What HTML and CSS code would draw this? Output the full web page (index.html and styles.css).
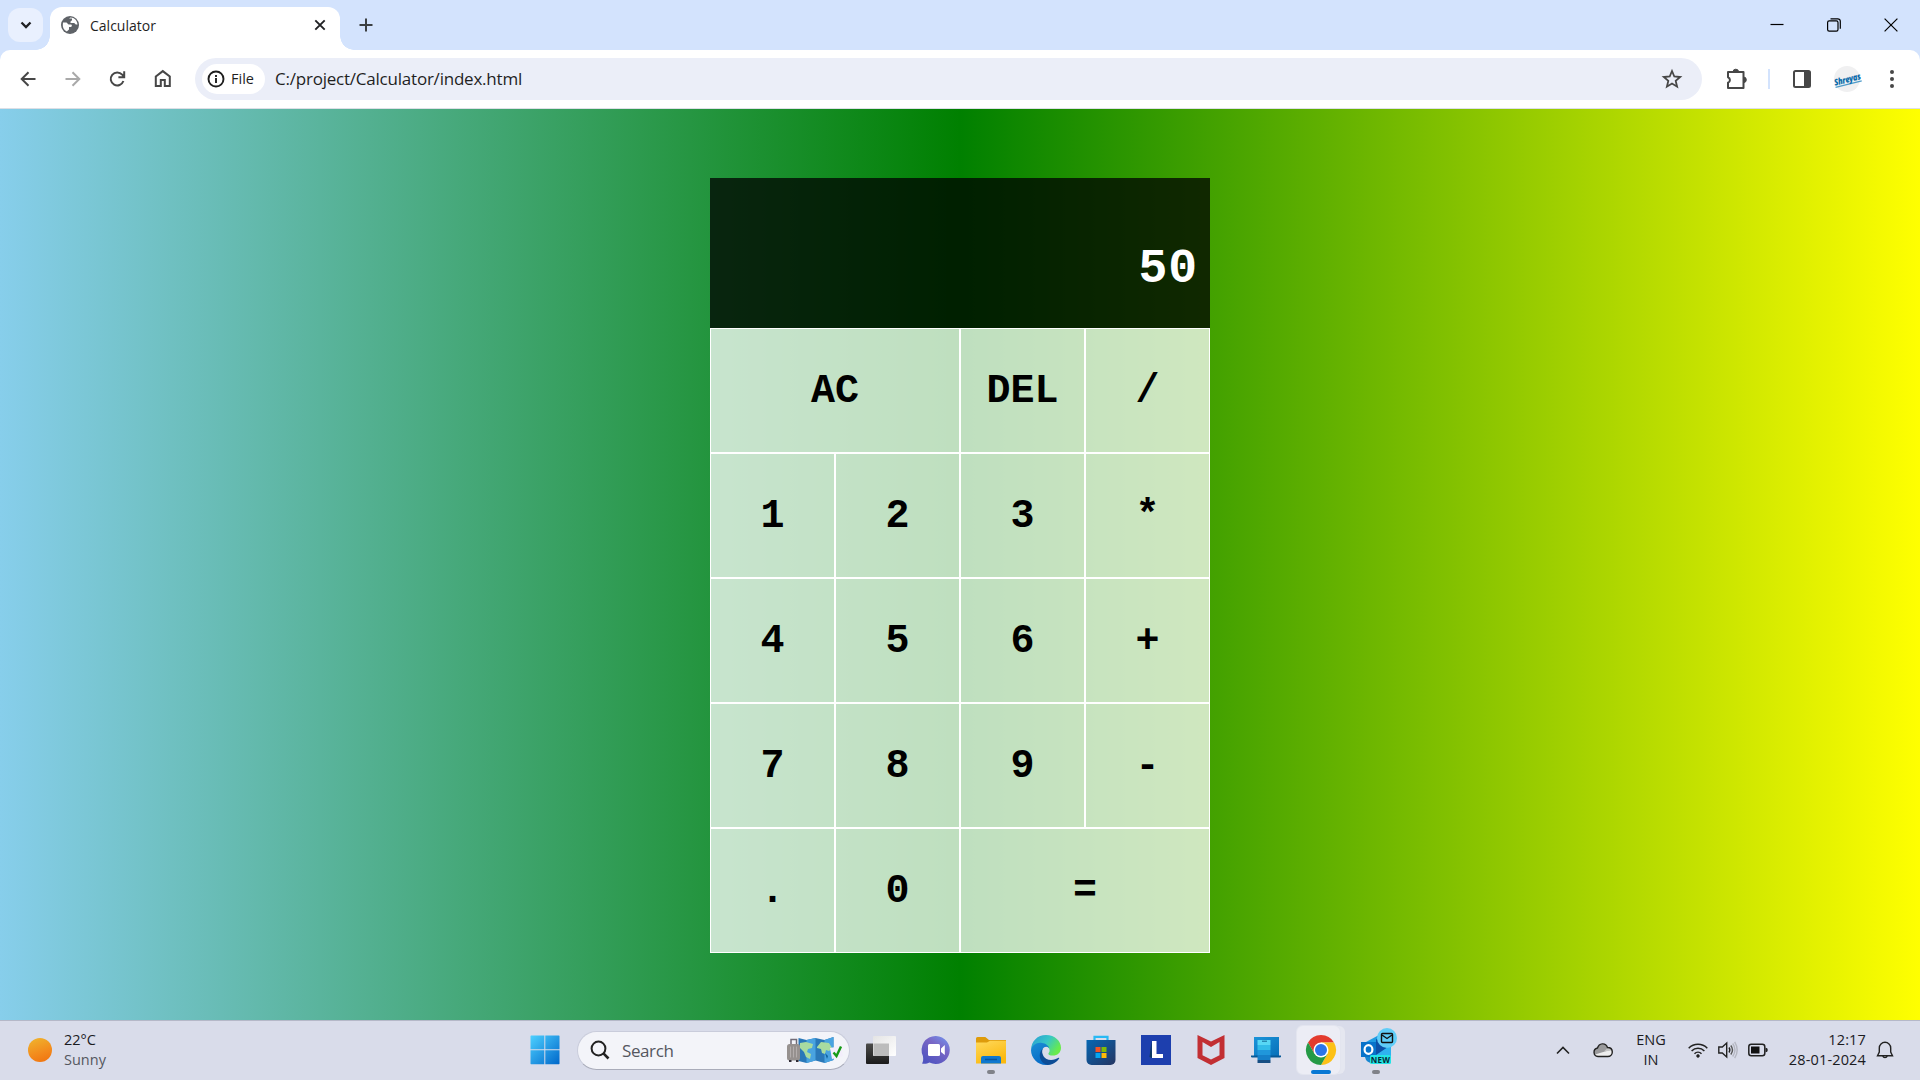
FILE: index.html
```html
<!DOCTYPE html>
<html lang="en">
<head>
<meta charset="utf-8">
<title>Calculator</title>
<link rel="stylesheet" href="styles.css">
</head>
<body>
<header class="tabstrip">
  <button class="tab-search"><svg width="12" height="8" viewBox="0 0 12 8"><path d="M1.500 1.500 6 6l4.500-4.500" fill="none" stroke="#202124" stroke-width="2.300"/></svg></button>
  <div class="tab">
    <svg class="globe" width="18" height="18" viewBox="0 0 18 18"><circle cx="9" cy="9" r="9" fill="#5f6368"/><path d="M2 6.500h3.500l2 2h2.200c1.800 0 1.300 2.500 0 2.500H8v2.500l-2.200 2C3 14 1.600 11.500 1.800 9zM8 2.500h3v1.800L9.500 5.500v1.400h3.700l1.600 1.600h1.700C16.200 4.500 13.500 1.500 9.500 1.500z" fill="#fff"/></svg>
    <span class="tab-title">Calculator</span>
    <svg class="tab-close" width="12" height="12" viewBox="0 0 12 12"><path d="m1.300 1.300 9.400 9.400m0-9.400-9.400 9.400" stroke="#202124" stroke-width="1.900"/></svg>
  </div>
  <svg class="new-tab" width="14" height="14" viewBox="0 0 14 14"><path d="M7 .5v13M.5 7h13" stroke="#3c4043" stroke-width="2"/></svg>
  <div class="window-buttons">
    <svg width="14" height="14" viewBox="0 0 14 14"><path d="M.5 6.500h13" stroke="#000" stroke-width="1.200"/></svg>
    <svg width="14" height="14" viewBox="0 0 14 14" fill="none" stroke="#000" stroke-width="1.200"><rect x=".6" y="2.800" width="10.400" height="10.400" rx="1.600"/><path d="M3.500.8h7.200a2.500 2.500 0 0 1 2.600 2.600v7.300"/></svg>
    <svg width="14" height="14" viewBox="0 0 14 14"><path d="m.6.6 12.800 12.800M13.400.6.6 13.400" stroke="#000" stroke-width="1.200"/></svg>
  </div>
</header>
<nav class="toolbar">
  <div class="nav-buttons">
    <svg width="16" height="16" viewBox="0 0 16 16" fill="none" stroke="#474747" stroke-width="2"><path d="M15.500 8H2M8.500 1.200 1.700 8l6.800 6.800"/></svg>
    <svg width="16" height="16" viewBox="0 0 16 16" fill="none" stroke="#a9a9a9" stroke-width="2"><path d="M.5 8H14M7.500 1.200 14.300 8l-6.800 6.800"/></svg>
    <svg width="16" height="16" viewBox="0.800 0 16 16" fill="none" stroke="#474747" stroke-width="2"><path d="M14.200 10A6.500 6.500 0 1 1 13 3.700L15 6M15 .3V6.300H9.200"/></svg>
    <svg width="18" height="18" viewBox="1.200 0.500 18 18" fill="none" stroke="#474747" stroke-width="2"><path d="M2 7 9 1.600 16 7v9.500h-5v-6H7v6H2z"/></svg>
  </div>
  <div class="omnibox">
    <span class="chip"><svg width="18" height="18" viewBox="0 0 18 18"><circle cx="9" cy="9" r="7.500" fill="none" stroke="#1f1f1f" stroke-width="1.900"/><path d="M9 8v5M9 5v1.900" stroke="#1f1f1f" stroke-width="1.900"/></svg><span>File</span></span>
    <span class="url">C:/project/Calculator/index.html</span>
    <svg class="star" width="20" height="20" viewBox="0 0 20 20"><path d="m10 2 2.300 5.500 5.900.5-4.500 3.900 1.400 5.800L10 14.600l-5.100 3.100 1.400-5.800L1.800 8l5.900-.5z" fill="none" stroke="#474747" stroke-width="1.800"/></svg>
  </div>
  <svg class="puzzle" width="22" height="22" viewBox="0 0 22 22"><path d="M2 4h15.500v16H2v-5.200a3 3 0 0 0 0-5.600z" fill="none" stroke="#474747" stroke-width="2" stroke-linejoin="round"/><path d="M7 4a2.800 2.800 0 0 1 5.600 0zM17.500 9a2.800 2.800 0 0 1 0 5.600z" fill="#474747" stroke="#474747"/></svg>
  <i class="separator"></i>
  <svg class="panel" width="18" height="18" viewBox="0 0 18 18"><rect x="1" y="1" width="16" height="16" rx="1.500" fill="none" stroke="#474747" stroke-width="2"/><path d="M11 1h6v16h-6z" fill="#474747"/></svg>
  <span class="avatar"><b>Shreyas</b></span>
  <svg class="dots" width="4" height="20" viewBox="0 0 4 20" fill="#474747"><circle cx="2" cy="3" r="2"/><circle cx="2" cy="10" r="2"/><circle cx="2" cy="17" r="2"/></svg>
</nav>
<main class="page">
  <div class="calculator">
    <output class="display">50</output>
    <button class="key wide">AC</button><button class="key">DEL</button><button class="key">/</button>
    <button class="key">1</button><button class="key">2</button><button class="key">3</button><button class="key">*</button>
    <button class="key">4</button><button class="key">5</button><button class="key">6</button><button class="key">+</button>
    <button class="key">7</button><button class="key">8</button><button class="key">9</button><button class="key">-</button>
    <button class="key">.</button><button class="key">0</button><button class="key wide">=</button>
  </div>
</main>
<footer class="taskbar">
  <div class="weather">
    <i class="sun"></i>
    <div class="two-line"><span>22°C</span><span class="muted">Sunny</span></div>
  </div>
  <svg class="start" width="30" height="30" viewBox="0 0 30 30"><defs><linearGradient id="win" x2="1" y2="1"><stop stop-color="#4dd0ff"/><stop offset="1" stop-color="#0067ca"/></linearGradient></defs><path d="M1 .5h13.300v13.800H.5V1zM15.300.5H29l.5.500v13.300H15.300zM.5 15.300h13.800v14H1l-.5-.5zM15.300 15.300h14.200v13.500l-.5.500H15.300z" fill="url(#win)"/></svg>
  <div class="search">
    <svg width="20" height="20" viewBox="0 0 20 20" fill="none" stroke="#222"><circle cx="8.500" cy="8.500" r="6.900" stroke-width="2"/><path d="m13.200 13.200 5.300 5.300" stroke-width="2.600"/></svg>
    <span>Search</span>
    <svg class="travel" width="58" height="28" viewBox="0 0 58 28">
      <path d="m11.500 2 8 2 9-2 9 2 9-3v23l-9 3-9-2.500-9 2.500-8-2z" fill="#2a78b8"/><path d="m19.500 4 9-2v22.500l-9 2.500zM37.500 4l9-3v23l-9 3z" fill="#49a3e0"/>
      <path d="M13 7l6-1 7 2-1 4-4 1-1 3 4 2-1 5-4-2-2-5-4-4zM30 11l4-5 8 1 3 5-3 3-3-1-1 4-3-1-1-4-4-1z" fill="#a8dba0"/>
      <path d="m38 17 3 3-1 3z" fill="#0f639d"/>
      <path d="M4 8V3.500h5.500V8" fill="none" stroke="#706b77" stroke-width="1.500"/><rect y="8" width="13" height="16.500" rx="2.500" fill="#96918f"/><path d="M3.500 10.500v11m3-11v11m3-11v11" stroke="#b9b4b4" stroke-width=".8"/><path d="M2 24h2.500v2H2zm7 0h2.500v2H9z" fill="#302c35"/>
      <path d="m43 12 11-2 2 10-11 3z" fill="#f3eefb"/><path d="m46.500 16.500 3 3.500 4.500-9.500" fill="none" stroke="#169b16" stroke-width="2.400"/>
    </svg>
  </div>
  <div class="apps">
    <span class="app"><svg width="30" height="30" viewBox="0 0 30 30"><defs><linearGradient id="tv" x2="0" y2="1"><stop stop-color="#4c4c4a"/><stop offset="1" stop-color="#1b1b1b"/></linearGradient><linearGradient id="tw" x2="1" y2="1"><stop stop-color="#e4e4e4"/><stop offset="1" stop-color="#fff"/></linearGradient></defs><rect y="8.500" width="23" height="20.500" rx="1" fill="url(#tv)"/><rect x="7" y="1" width="23" height="20" rx="1" fill="url(#tw)"/><path d="M7.500 8.500H23V21H8.500l-1-1z" fill="#bcbcbc"/></svg></span>
    <span class="app"><svg width="30" height="30" viewBox="0 0 30 30"><defs><linearGradient id="ch" x1="1" x2="0.300" y2="1"><stop stop-color="#7299f2"/><stop offset=".45" stop-color="#7866c5"/><stop offset="1" stop-color="#5054c0"/></linearGradient></defs><path d="M15 1a14 14 0 1 1-6.500 26.500C6 29 3 29 1 28.500c1.300-1.500 1.500-4.500.9-7.500A14 14 0 0 1 15 1z" fill="url(#ch)"/><rect x="7" y="9" width="12" height="12" rx="1.500" fill="#fff"/><path d="m20 13.500 3.800-3.500v10L20 17z" fill="#fff"/></svg></span>
    <span class="app running"><svg width="30" height="30" viewBox="0 0 30 30"><defs><linearGradient id="fo" x2=".5" y2="1"><stop stop-color="#ffd95d"/><stop offset="1" stop-color="#fbb90e"/></linearGradient></defs><path d="M0 3.500Q0 2 1.500 2h7.800L13 5h17v6H0z" fill="#de9b0b"/><path d="M0 7.500h11L14 5.800h16v22.700H0z" fill="url(#fo)"/><path d="M5 28.500V23q0-2 2-2h16q2 0 2 2v5.500z" fill="#0f78cf"/><path d="M9 24.500h12" stroke="#07559e" stroke-width="1.500"/></svg></span>
    <span class="app"><svg width="30" height="30" viewBox="0 0 30 30"><defs><linearGradient id="e1" x2="1" y2=".5"><stop stop-color="#299bd4"/><stop offset=".55" stop-color="#36c6c7"/><stop offset="1" stop-color="#68eb4b"/></linearGradient><linearGradient id="e2" x2=".5" y2="1"><stop stop-color="#1b8ed5"/><stop offset="1" stop-color="#0669c5"/></linearGradient></defs><path d="M0 15C.4 6 6.500 0 15 0c9 0 15 6.200 15 12.700 0 5-3.700 7.900-8 7.900-3.300 0-5-1.200-4.600-2.200 2.500-2.700 1.200-7.100-4.400-7.900C7 9.800 1.500 11.500 0 15z" fill="url(#e1)"/><path d="M0 15C1 10 6 7 11 8c3.500.4 6.500 2.500 7.200 5-4.300-3.400-8 1-7.200 5.500 1 6 7 9.500 9.500 10.500C10 33 0 25 0 15z" fill="url(#e2)"/><path d="M11.700 13.500c-2 5 1.500 11.500 8.300 11.500 3 0 5.500-1.300 7.500-2.200.6-.2 1 .2.600.8C25.500 27.500 21 30 16.500 30 9 28.500 6 19 11.700 13.500z" fill="#0d4d96"/></svg></span>
    <span class="app"><svg width="30" height="30" viewBox="0 0 30 30"><defs><linearGradient id="st" x2="1" y2="1"><stop stop-color="#0667b3"/><stop offset="1" stop-color="#253562"/></linearGradient></defs><path d="M8.500 6V1.800h13V6" fill="none" stroke="#28b9f4" stroke-width="2.200"/><path d="M.5 5h29v20a5 5 0 0 1-5 5h-19a5 5 0 0 1-5-5z" fill="url(#st)"/><path d="M9.500 12h5v5h-5z" fill="#f35325"/><path d="M15.500 12h5v5h-5z" fill="#81bc06"/><path d="M9.500 18h5v5h-5z" fill="#05a6f0"/><path d="M15.500 18h5v5h-5z" fill="#ffba08"/></svg></span>
    <span class="app"><svg width="30" height="30" viewBox="0 0 30 30"><path d="M0 0h30v30H0z" fill="#1d3fae"/><path d="m10.500 6-2 16 2.500 1z" fill="#0c385f"/><path d="M11 6h4.500v13H22v4H11z" fill="#fff"/></svg></span>
    <span class="app"><svg width="30" height="30" viewBox="0 0 30 30"><path d="M1.500 0 15 6.500 28.500 0v23L15 30 1.500 23zM6.500 7v13.200L15 24.500l8.500-4.300V7L15 12z" fill="#c22f33" fill-rule="evenodd"/></svg></span>
    <span class="app"><svg width="30" height="30" viewBox="0 0 30 30"><defs><linearGradient id="pl" x2="1" y2="1"><stop stop-color="#1b94d9"/><stop offset="1" stop-color="#0870b9"/></linearGradient></defs><path d="M3 2h25v19H3z" fill="url(#pl)"/><path d="M0 20.500h30v1.500l-1 .5H1l-1-.5z" fill="#075998"/><path d="M6.500 5h13v5h-13z" fill="#57d7f5"/><path d="M6.500 10h13v5h-13z" fill="#32bce9"/><path d="M6.500 15h13v5h-13z" fill="#2097db"/><path d="M6.500 20h13v5h-13z" fill="#1680c9"/><path d="M6.500 25h13v3h-13z" fill="#174e83"/><path d="M11 6.200h5" stroke="#126794"/></svg></span>
    <span class="app active"><svg width="30" height="30" viewBox="0 0 30 30"><path d="M2 7.500a15 15 0 0 1 26 0H15L8.500 18.700z" fill="#e33b2e"/><path d="M28 7.500A15 15 0 0 1 15 30l6.500-11.200L15 7.500z" fill="#fdc116"/><path d="M2 7.500A15 15 0 0 0 15 30l6.500-11.200h-13z" fill="#259a46"/><circle cx="15" cy="15" r="7.500" fill="#fff"/><circle cx="15" cy="15" r="6" fill="#2c75e9"/></svg></span>
    <span class="app running outlook"><svg width="37" height="38" viewBox="0 0 37 38">
      <path d="m5 14 13-7 12 7v20H8z" fill="#1f9be2"/><path d="m15 11 14 7-14 10z" fill="#0b51a8"/><path d="m15 27 15-10v17H9z" fill="#2fb3ef"/><path d="M4 29h8v6q-7 0-8-6z" fill="#1687d1"/><path d="M0 14h15v15H0z" fill="#0873ca"/><ellipse cx="7.500" cy="21.500" rx="3.900" ry="4.300" fill="none" stroke="#fff" stroke-width="2.200"/><circle cx="26" cy="10" r="10" fill="#60cdf8"/><rect x="20.500" y="5.500" width="11" height="9" rx="1" fill="none" stroke="#111" stroke-width="1.400"/><path d="m21 7 5 3.500L31 7" fill="none" stroke="#111" stroke-width="1.300"/><rect x="9" y="27" width="21" height="9" rx="1.500" fill="#24e4e5"/><text class="new" x="19.500" y="34.500" text-anchor="middle">NEW</text></svg></span>
  </div>
  <div class="tray">
    <svg class="chevron" width="14" height="9" viewBox="0 0 14 9"><path d="m1 7.500 6-6 6 6" fill="none" stroke="#222" stroke-width="1.600"/></svg>
    <svg class="cloud" width="20" height="16" viewBox="0 0 20 16"><path d="M5 14.500a4.300 4.300 0 0 1-.5-8.500C6 1 12.500.2 14.500 5.500c3 0 4.800 2 4.800 4.500s-2 4.500-4.500 4.500z" fill="#eee"/><path d="M2 12.500 18.500 7.500C17 5.500 15.500 5.500 14.500 5.500 12.500.5 6 1.500 4.500 6 1 7 .2 10 2 12.500z" fill="#9a9a9c"/><path d="m11 9.500 4-4c2 0 3.500 1 4 3z" fill="#c4c4c4"/><path d="M5 14.500a4.300 4.300 0 0 1-.5-8.500C6 1 12.500.2 14.500 5.500c3 0 4.800 2 4.800 4.500s-2 4.500-4.500 4.500z" fill="none" stroke="#222" stroke-width="1.400"/></svg>
    <div class="two-line lang"><span>ENG</span><span>IN</span></div>
    <svg width="20" height="16" viewBox="0 0 20 16" fill="none" stroke="#222" stroke-width="1.500"><path d="M.7 6.200a13 13 0 0 1 18.600 0M3.600 9a9 9 0 0 1 12.800 0M6.500 11.700a5 5 0 0 1 7 0"/><circle cx="10" cy="14" r="1.400" fill="#222" stroke-width=".6"/></svg>
    <svg class="speaker" width="20" height="18" viewBox="0 0 20 18" fill="none" stroke="#222" stroke-width="1.400"><path d="M.8 6h3.500L8.700 2v14l-4.400-4H.8zM11 6.500q1.700 2.500 0 5"/><path d="M12.800 4.500q3.400 4.500 0 9" stroke="#555"/><path d="M14.700 2.500q4.500 6.500 0 13M16.700.8q5 8.200 0 16.400" stroke="#b5b7c2"/></svg>
    <svg class="battery" width="20" height="14" viewBox="0 0 20 14"><rect x=".8" y="1.300" width="16" height="11.400" rx="2.500" fill="none" stroke="#222" stroke-width="1.500"/><path d="M3 3.500h8.500v7H3z" fill="#111"/><path d="M17.500 4.800q2.300 0 2.300 2.200t-2.300 2.200z" fill="#222"/></svg>
    <div class="two-line clock"><span>12:17</span><span>28-01-2024</span></div>
    <svg class="bell" width="18" height="20" viewBox="0 0 18 20" fill="none" stroke="#222" stroke-width="1.400"><path d="M3.300 8a5.700 5.700 0 0 1 11.400 0v4l1.800 3.800h-15L3.300 12z"/><path d="M6.800 16a2.300 2.300 0 0 0 4.400 0"/></svg>
  </div>
</footer>
</body>
</html>
```
FILE: styles.css
```css
* { box-sizing: border-box; }
body {
  margin: 0;
  width: 1920px;
  height: 1080px;
  overflow: hidden;
  display: grid;
  grid-template-rows: 50px 59px 911px 60px;
  background: #d3e3fd;
  font-family: "Open Sans", "Noto Sans", sans-serif;
}
button { border: 0; padding: 0; background: none; font: inherit; color: inherit; }
svg { display: block; flex: none; overflow: visible; }

/* Tab strip */
.tabstrip { display: flex; align-items: center; padding-left: 8px; }
.tab-search {
  width: 35px;
  height: 34px;
  border-radius: 12px;
  background: #e9f0fe;
  display: grid;
  place-items: center;
}
.tab {
  position: relative;
  align-self: flex-end;
  display: flex;
  align-items: center;
  width: 290px;
  height: 43px;
  margin-left: 7px;
  padding: 0 14px 7px 11px;
  border-radius: 12px 12px 0 0;
  background: #fff;
}
.tab::before, .tab::after {
  content: "";
  position: absolute;
  bottom: 0;
  width: 14px;
  height: 14px;
}
.tab::before { left: -14px; background: radial-gradient(circle at 0 0, transparent 13.5px, #fff 14px); }
.tab::after { right: -14px; background: radial-gradient(circle at 100% 0, transparent 13.5px, #fff 14px); }
.tab-title { margin-left: 11px; font-size: 14px; color: #1f1f1f; letter-spacing: 0; }
.tab-close { margin-left: auto; }
.new-tab { margin-left: 18.5px; }
.window-buttons { display: flex; gap: 43px; margin-left: auto; padding-right: 22px; }

/* Toolbar */
.toolbar {
  display: flex;
  align-items: center;
  padding-left: 20px;
  background: #fff;
  border-bottom: 1px solid #dcdfe6;
  border-radius: 10px 10px 0 0;
}
.nav-buttons { display: flex; align-items: center; gap: 29px; width: 175px; }
.omnibox {
  display: flex;
  align-items: center;
  width: 1507px;
  height: 42px;
  padding: 0 20px 0 7px;
  border-radius: 21px;
  background: #ebeef8;
}
.chip {
  display: flex;
  align-items: center;
  gap: 6px;
  width: 63px;
  height: 30px;
  padding-left: 5px;
  border-radius: 15px;
  background: #fff;
  font-size: 14.5px;
  color: #1f1f1f;
}
.chip span { padding-bottom: 1px; }
.url { margin-left: 10px; padding-bottom: 1px; font-size: 17px; letter-spacing: -0.22px; color: #1f1f1f; }
.star { margin-left: auto; }
.puzzle { margin-left: 24px; }
.separator { width: 2px; height: 20px; margin-left: 20px; background: #d3e3fd; }
.panel { margin-left: 23px; }
.avatar {
  display: grid;
  place-items: center;
  width: 26px;
  height: 26px;
  margin-left: 23px;
  border-radius: 50%;
  background: #f0f0f1;
}
.avatar b {
  font: italic 800 7.5px "Open Sans", sans-serif;
  letter-spacing: -0.3px;
  color: #0c6cab;
  transform: rotate(-14deg) scaleY(1.2);
  border-bottom: 1px solid #4f9bc9;
  line-height: 8px;
}
.dots { margin-left: 30px; }

/* Calculator page */
.page {
  padding-top: 69px;
  background: linear-gradient(to right, skyblue, green, yellow);
}
.calculator {
  display: grid;
  grid-template-columns: repeat(4, 125px);
  grid-template-rows: 150px repeat(5, 125px);
  width: 500px;
  margin: 0 auto;
  font-family: "Courier New", "Liberation Mono", monospace;
  font-weight: bold;
}
.display {
  grid-column: 1 / -1;
  padding: 63px 12px 0 0;
  text-align: right;
  font-size: 48px;
  line-height: 57px;
  letter-spacing: 1px;
  color: #fff;
  background: rgba(0, 0, 0, 0.75);
}
.key {
  padding-top: 1px;
  border: 1px solid #fff;
  background: rgba(255, 255, 255, 0.75);
  font-size: 40px;
  color: #000;
}
.wide { grid-column: span 2; }

/* Taskbar */
.taskbar {
  display: flex;
  align-items: center;
  padding-bottom: 1px;
  border-top: 1px solid #b5b8c8;
  background: #d9dcea;
  color: #1b1b1f;
}
.weather { display: flex; align-items: center; width: 530px; padding-left: 28px; }
.sun { width: 24px; height: 24px; border-radius: 50%; background: linear-gradient(160deg, #efb72f, #f38a1c 60%, #f0700d); }
.two-line { display: flex; flex-direction: column; font-size: 14.5px; line-height: 20px; }
.weather .two-line { margin-left: 12px; }
.muted { color: #55575f; }
.search {
  display: flex;
  align-items: center;
  width: 273px;
  height: 39px;
  margin-left: 17px;
  padding: 0 4px 0 12px;
  border-radius: 20px;
  border: 1px solid #c9ccdb;
  border-bottom-color: #a9acba;
  background: #f3f4f9;
  font-size: 17px;
  letter-spacing: -0.4px;
  color: #55575f;
}
.search span { margin-left: 12px; }
.travel { margin-left: auto; }
.apps { display: flex; margin-left: 3px; }
.app { position: relative; display: grid; place-items: center; width: 55px; height: 58px; }
.running::after, .active::after {
  content: "";
  position: absolute;
  left: 24px;
  bottom: 5px;
  width: 8px;
  height: 4px;
  border-radius: 2px;
  background: #808289;
}
.active::before {
  content: "";
  position: absolute;
  left: 4px;
  top: 5px;
  width: 43px;
  height: 48px;
  border-radius: 6px;
  background: #ecedf5;
  box-shadow: 0 0 0 1px #e3e5ef, 5px 0 0 #e5e7f0;
}
.active svg { position: relative; }
.active::after { left: 18px; width: 20px; background: #0878d4; }
.outlook svg { margin: -7px 0 0 8px; }
.new { font: bold 8px "Open Sans", sans-serif; letter-spacing: 0.2px; fill: #062c38; }
.tray { display: flex; align-items: center; margin-left: auto; padding-right: 26px; }
.cloud { margin-left: 23px; }
.lang { width: 30px; margin: 0 22px 0 23px; text-align: center; }
.speaker { margin-left: 10px; }
.battery { margin-left: 10px; }
.clock { width: 90px; margin-left: 8px; text-align: right; letter-spacing: 0.15px; }
.bell { margin-left: 10px; }
```
